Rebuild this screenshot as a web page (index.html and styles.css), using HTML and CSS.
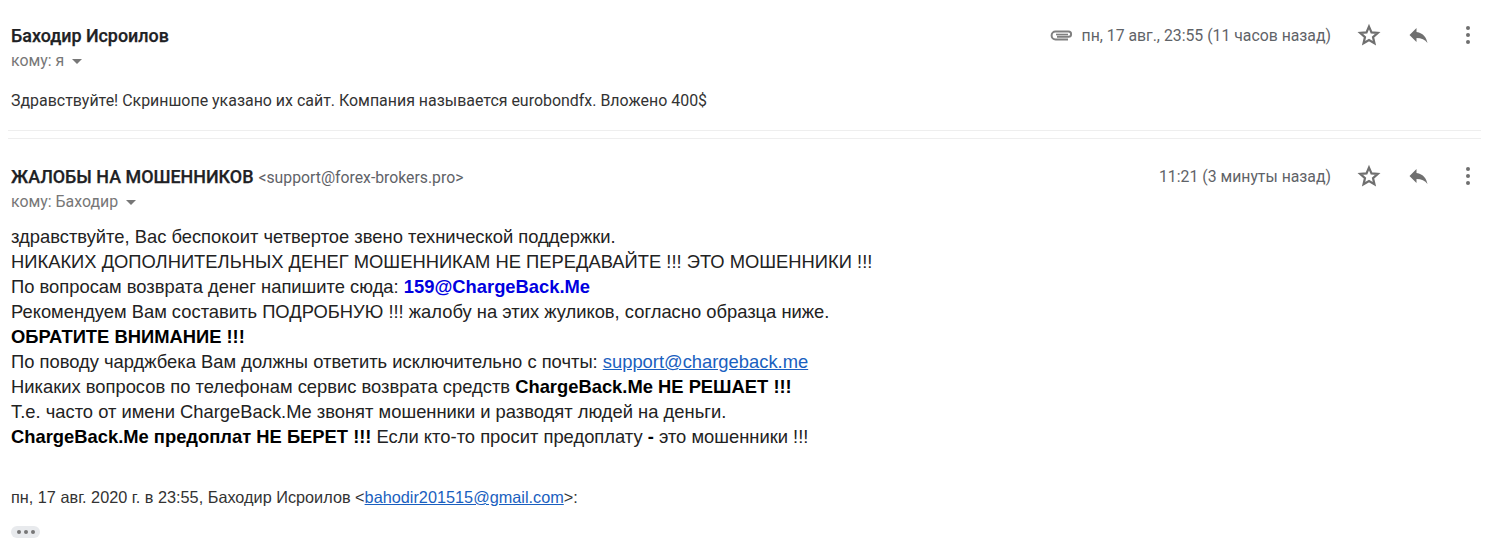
FILE: index.html
```html
<!DOCTYPE html>
<html lang="ru">
<head>
<meta charset="utf-8">
<title>Письмо</title>
<link rel="stylesheet" href="styles.css">
</head>
<body>
<section class="msg first">
  <header class="head">
    <div class="who">
      <div class="sender"><b class="name">Баходир Исроилов</b></div>
      <div class="to">кому: я <span class="caret"></span></div>
    </div>
    <div class="meta">
      <svg class="clip" viewBox="0 0 24 14" width="24" height="14"><path d="M7 8.800h11.500a2.600 2.600 0 0 0 0-5.200H5.500a3.900 3.900 0 0 0 0 7.800h12.500" fill="none" stroke="#808080" stroke-width="2"/><path d="M6 6.500h12" fill="none" stroke="#808080" stroke-width="1.600"/></svg>
      <span class="date">пн, 17 авг., 23:55 (11 часов назад)</span>
      <svg class="ico star" viewBox="0 0 24 24" width="24" height="24"><path d="M12 3.600l2.500 5.800 6.300.55-4.800 4.150 1.450 6.150L12 17l-5.450 3.250L8 14.100 3.200 9.950l6.300-.55z" fill="none" stroke="#6f6f6f" stroke-width="2.200"/></svg>
      <svg class="ico reply" viewBox="0 0 24 24" width="24" height="24"><path d="M10.500 9V5l-7 7 7 7v-4.100c5 0 8.500 1.600 11 5.100-1-5-4-10-11-11z" fill="#6f6f6f"/></svg>
      <svg class="ico more" viewBox="0 0 24 24" width="24" height="24"><circle cx="12" cy="5" r="2" fill="#6f6f6f"/><circle cx="12" cy="12" r="2" fill="#6f6f6f"/><circle cx="12" cy="19" r="2" fill="#6f6f6f"/></svg>
    </div>
  </header>
  <p class="snippet">Здравствуйте! Скриншопе указано их сайт. Компания называется eurobondfx. Вложено 400$</p>
</section>
<div class="rule"></div>
<section class="msg second">
  <header class="head">
    <div class="who">
      <div class="sender"><b class="name">ЖАЛОБЫ НА МОШЕННИКОВ</b> <span class="addr">&lt;support@forex-brokers.pro&gt;</span></div>
      <div class="to">кому: Баходир <span class="caret"></span></div>
    </div>
    <div class="meta">
      <span class="date">11:21 (3 минуты назад)</span>
      <svg class="ico star" viewBox="0 0 24 24" width="24" height="24"><path d="M12 3.600l2.500 5.800 6.300.55-4.800 4.150 1.450 6.150L12 17l-5.450 3.250L8 14.100 3.200 9.950l6.300-.55z" fill="none" stroke="#6f6f6f" stroke-width="2.200"/></svg>
      <svg class="ico reply" viewBox="0 0 24 24" width="24" height="24"><path d="M10.500 9V5l-7 7 7 7v-4.100c5 0 8.500 1.600 11 5.100-1-5-4-10-11-11z" fill="#6f6f6f"/></svg>
      <svg class="ico more" viewBox="0 0 24 24" width="24" height="24"><circle cx="12" cy="5" r="2" fill="#6f6f6f"/><circle cx="12" cy="12" r="2" fill="#6f6f6f"/><circle cx="12" cy="19" r="2" fill="#6f6f6f"/></svg>
    </div>
  </header>
  <div class="body">
    <div>здравствуйте, Вас беспокоит четвертое звено технической поддержки.</div>
    <div>НИКАКИХ ДОПОЛНИТЕЛЬНЫХ ДЕНЕГ МОШЕННИКАМ НЕ ПЕРЕДАВАЙТЕ !!! ЭТО МОШЕННИКИ !!!</div>
    <div>По вопросам возврата денег напишите сюда: <b class="blue">159@ChargeBack.Me</b></div>
    <div>Рекомендуем Вам составить ПОДРОБНУЮ !!! жалобу на этих жуликов, согласно образца ниже.</div>
    <div><b>ОБРАТИТЕ ВНИМАНИЕ !!!</b></div>
    <div>По поводу чарджбека Вам должны ответить исключительно с почты: <a href="#">support@chargeback.me</a></div>
    <div>Никаких вопросов по телефонам сервис возврата средств <b>ChargeBack.Me НЕ РЕШАЕТ !!!</b></div>
    <div>Т.е. часто от имени ChargeBack.Me звонят мошенники и разводят людей на деньги.</div>
    <div><b>ChargeBack.Me предоплат НЕ БЕРЕТ !!!</b> Если кто-то просит предоплату <b>-</b> это мошенники !!!</div>
  </div>
  <div class="quote">пн, 17 авг. 2020 г. в 23:55, Баходир Исроилов &lt;<a href="#">bahodir201515@gmail.com</a>&gt;:</div>
  <div class="dots"><i></i><i></i><i></i></div>
</section>
</body>
</html>
```
FILE: styles.css
```css
html, body { margin: 0; padding: 0; background: #fff; }
body { width: 1499px; height: 542px; overflow: hidden; font-family: "Liberation Sans", Arial, sans-serif; color: #222; }
.msg { padding: 0 11px; }
.first { padding-top: 25px; height: 105px; box-sizing: border-box; }
.head { display: flex; justify-content: space-between; align-items: flex-start; }
.sender { font-size: 17.9px; line-height: 21px; white-space: nowrap; }
.name { font-family: "Roboto", sans-serif; font-weight: 500; color: #202124; -webkit-text-stroke: .25px #202124; }
.addr { font-family: "Roboto", sans-serif; font-size: 15.78px; color: #5f6368; }
.to { font-family: "Roboto", sans-serif; font-size: 15.9px; line-height: 20px; color: #777; margin-top: 4px; }
.caret { display: inline-block; width: 0; height: 0; border: 5.500px solid transparent; border-top-color: #777; border-bottom: 0; margin-left: 3.500px; vertical-align: 2px; }
.meta { display: flex; align-items: center; height: 24px; margin-right: 8px; margin-top: -2px; }
.date { font-family: "Roboto", sans-serif; font-size: 15.8px; color: #5f6368; margin-right: 26px; }
.clip { margin-right: 8px; }
.ico { display: block; }
.star { margin-right: 25px; }
.reply { margin-right: 26px; }
.snippet { margin: 20px 0 0; font-family: "Roboto", sans-serif; font-size: 15.95px; line-height: 20px; color: #333; }
.rule { height: 7px; margin: 25px 18px 0 8px; border-top: 1px solid #eee; border-bottom: 1px solid #eee; }
.second { padding-top: 27px; }
.body { margin-top: 12px; font-size: 18.36px; line-height: 25px; color: #222; }
.body b { color: #000; }
.body b.blue { color: #0000e0; }
a { color: #1a5fc0; text-decoration: underline; }
.quote { margin-top: 36px; font-size: 16.28px; line-height: 25px; color: #333; }
.dots { display: flex; gap: 3px; align-items: center; justify-content: center; width: 29px; height: 12px; margin-top: 16px; background: #e8eaed; border-radius: 6px; }
.dots i { display: block; width: 4px; height: 4px; border-radius: 50%; background: #777; }
```
